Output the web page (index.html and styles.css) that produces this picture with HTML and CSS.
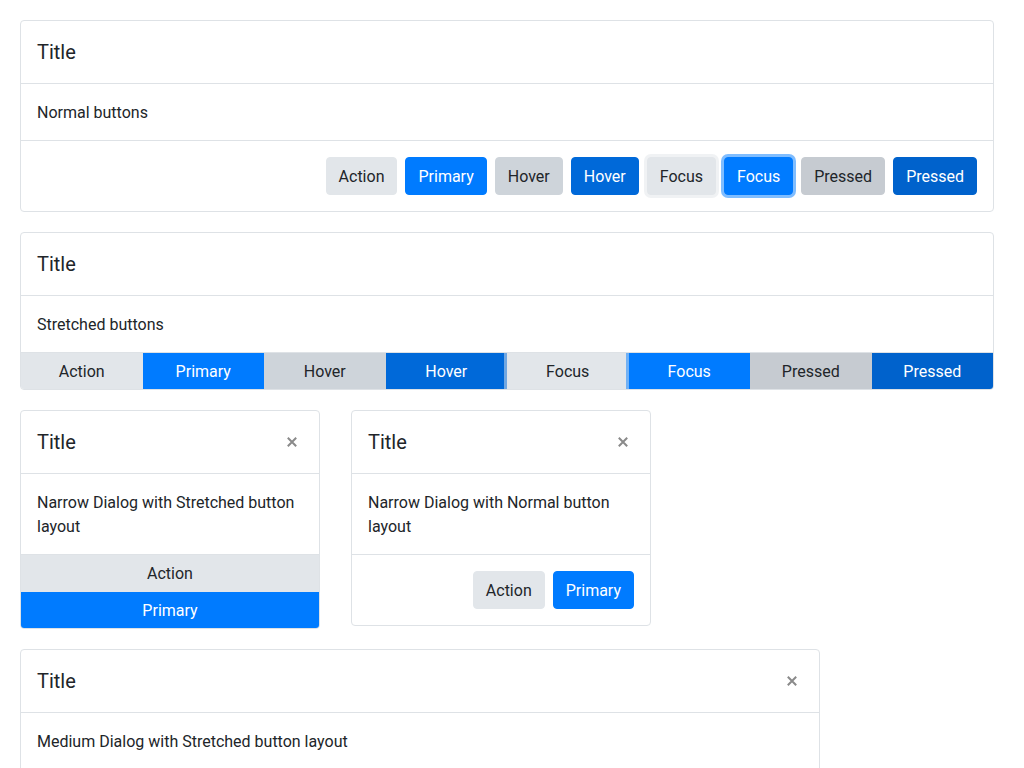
FILE: index.html
```html
<!DOCTYPE html>
<html lang="en">
<head>
<meta charset="utf-8">
<title>Dialogs</title>
<link rel="stylesheet" href="styles.css">
</head>
<body>
  <div class="dialog">
    <div class="dialog-header"><span class="dialog-title">Title</span></div>
    <div class="dialog-body">Normal buttons</div>
    <div class="dialog-footer">
      <button class="btn btn-secondary">Action</button>
      <button class="btn btn-primary">Primary</button>
      <button class="btn btn-secondary is-hover">Hover</button>
      <button class="btn btn-primary is-hover">Hover</button>
      <button class="btn btn-secondary is-focus">Focus</button>
      <button class="btn btn-primary is-focus">Focus</button>
      <button class="btn btn-secondary is-pressed">Pressed</button>
      <button class="btn btn-primary is-pressed">Pressed</button>
    </div>
  </div>

  <div class="dialog">
    <div class="dialog-header"><span class="dialog-title">Title</span></div>
    <div class="dialog-body">Stretched buttons</div>
    <div class="dialog-footer-stretched">
      <button class="btn btn-secondary">Action</button>
      <button class="btn btn-primary">Primary</button>
      <button class="btn btn-secondary is-hover">Hover</button>
      <button class="btn btn-primary is-hover">Hover</button>
      <button class="btn btn-secondary is-focus">Focus</button>
      <button class="btn btn-primary is-focus">Focus</button>
      <button class="btn btn-secondary is-pressed">Pressed</button>
      <button class="btn btn-primary is-pressed">Pressed</button>
    </div>
  </div>

  <div class="dialog-row">
    <div class="dialog dialog-narrow">
      <div class="dialog-header">
        <span class="dialog-title">Title</span>
        <span class="dialog-close"><svg width="10" height="10" viewBox="0 0 10 10"><path d="M0.8 0.8L9.2 9.2M9.2 0.8L0.8 9.2" stroke="#8a8a8a" stroke-width="2" fill="none"/></svg></span>
      </div>
      <div class="dialog-body">Narrow Dialog with Stretched button layout</div>
      <div class="dialog-footer-stretched is-vertical">
        <button class="btn btn-secondary">Action</button>
        <button class="btn btn-primary">Primary</button>
      </div>
    </div>
    <div class="dialog dialog-narrow">
      <div class="dialog-header">
        <span class="dialog-title">Title</span>
        <span class="dialog-close"><svg width="10" height="10" viewBox="0 0 10 10"><path d="M0.8 0.8L9.2 9.2M9.2 0.8L0.8 9.2" stroke="#8a8a8a" stroke-width="2" fill="none"/></svg></span>
      </div>
      <div class="dialog-body">Narrow Dialog with Normal button layout</div>
      <div class="dialog-footer">
        <button class="btn btn-secondary">Action</button>
        <button class="btn btn-primary">Primary</button>
      </div>
    </div>
  </div>

  <div class="dialog dialog-medium">
    <div class="dialog-header">
      <span class="dialog-title">Title</span>
      <span class="dialog-close"><svg width="10" height="10" viewBox="0 0 10 10"><path d="M0.8 0.8L9.2 9.2M9.2 0.8L0.8 9.2" stroke="#8a8a8a" stroke-width="2" fill="none"/></svg></span>
    </div>
    <div class="dialog-body">Medium Dialog with Stretched button layout</div>
    <div class="dialog-footer-stretched">
      <button class="btn btn-secondary">Action</button>
      <button class="btn btn-primary">Primary</button>
    </div>
  </div>
</body>
</html>
```

FILE: styles.css
```css
* { box-sizing: border-box; }

body {
  margin: 0;
  padding: 20px 30px 20px 20px;
  background: #fff;
  font-family: Roboto, "Liberation Sans", sans-serif;
  font-size: 16px;
  line-height: 24px;
  color: #212529;
}

.dialog {
  background: #fff;
  border: 1px solid #dee2e6;
  border-radius: 4px;
  overflow: hidden;
  margin-bottom: 20px;
}

.dialog-narrow { width: 300px; margin-bottom: 0; }
.dialog-medium { width: 800px; }

.dialog-row {
  display: flex;
  align-items: flex-start;
  gap: 31px;
  margin-bottom: 20px;
}

.dialog-header {
  display: flex;
  align-items: center;
  justify-content: space-between;
  padding: 16px;
  border-bottom: 1px solid #dee2e6;
}

.dialog-title {
  font-size: 20px;
  line-height: 30px;
  font-weight: 400;
}

.dialog-close {
  display: flex;
  width: 23px;
  height: 22px;
  align-items: center;
  justify-content: center;
}

.dialog-body {
  padding: 17px 16px 15px;
}

.dialog-footer {
  display: flex;
  justify-content: flex-end;
  gap: 8px;
  padding: 16px;
  border-top: 1px solid #dee2e6;
}

.dialog-footer-stretched {
  display: flex;
  border-top: 1px solid #dee2e6;
  overflow: hidden;
}

.dialog-footer-stretched.is-vertical { flex-direction: column; }

.btn {
  font-family: inherit;
  font-size: 16px;
  line-height: 24px;
  padding: 7px 12px 5px;
  border: 1px solid transparent;
  border-radius: 4px;
  cursor: pointer;
  margin: 0;
}

.dialog-footer-stretched .btn {
  flex: 1 1 0;
  border: 0;
  border-radius: 0;
  height: 36px;
  padding: 7px 6px 5px;
}

.dialog-footer-stretched.is-vertical .btn {
  flex: 0 0 auto;
  height: 36.5px;
}

.btn-secondary { background: #e2e6ea; border-color: #e2e6ea; color: #212529; }
.btn-secondary.is-hover { background: #ced4da; border-color: #ced4da; }
.btn-secondary.is-focus { box-shadow: 0 0 0 3px rgba(226, 230, 234, 0.5); }
.btn-secondary.is-pressed { background: #c6cbd1; border-color: #c6cbd1; }

.btn-primary { background: #007bff; border-color: #007bff; color: #fff; }
.btn-primary.is-hover { background: #0069d9; border-color: #0069d9; }
.btn-primary.is-focus { box-shadow: 0 0 0 3px rgba(0, 123, 255, 0.5); }
.btn-primary.is-pressed { background: #0062cc; border-color: #0062cc; }
```
